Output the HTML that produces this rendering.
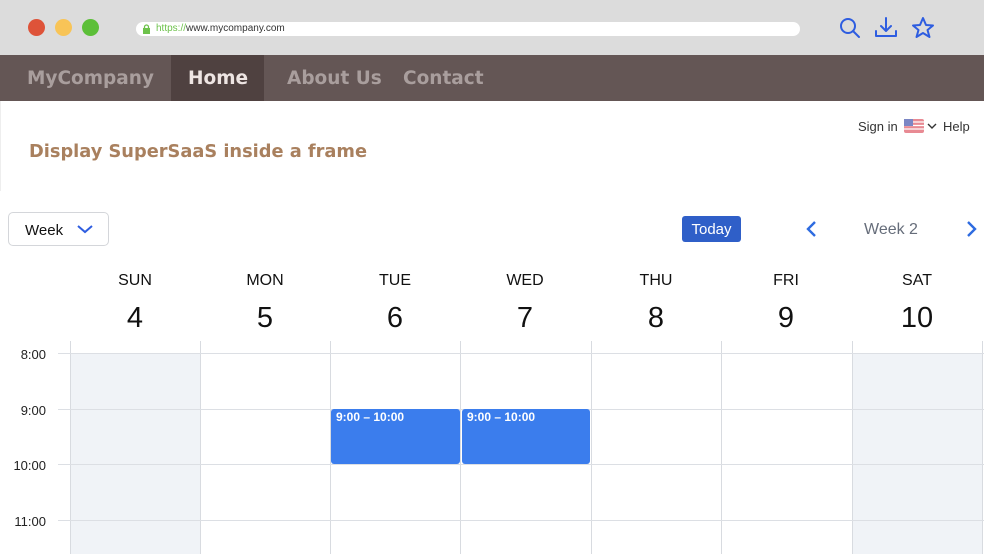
<!DOCTYPE html>
<html><head><meta charset="utf-8"><style>
*{margin:0;padding:0;box-sizing:border-box}
body{width:984px;height:554px;overflow:hidden;background:#fff;font-family:"Liberation Sans",sans-serif;position:relative}
.a{position:absolute}
.top{left:0;top:0;width:984px;height:55px;background:#dcdcdc}
.dot{width:17px;height:17px;border-radius:50%;top:19px}
.url{left:136px;top:22px;width:664px;height:14px;background:#fff;border-radius:7px;font-size:10px;line-height:14px;padding-left:20px;color:#333}
.nav{left:0;top:55px;width:984px;height:46px;background:#645655;font-family:"DejaVu Sans",sans-serif;font-weight:bold;font-size:18.5px;color:#a99e9d}
.nav span{position:absolute;top:13px}
.h{left:29px;top:141px;font-family:"DejaVu Sans",sans-serif;font-weight:bold;font-size:17.8px;color:#a9805e}
.vl{width:1px;background:#d8dbe0;top:341px;height:213px}
.hl{height:1px;background:#dcdfe4;left:58px;width:926px}
.dn{font-size:16px;color:#111;width:130px;text-align:center;top:272px}
.dd{font-size:29px;color:#111;width:130px;text-align:center;top:302px}
.t{font-size:13px;color:#222;width:46px;text-align:right;left:0}
.ev{background:#3b7ded;border-radius:3px;color:#fff;font-weight:bold;font-size:12px;padding:1px 5px;top:409px;height:55px}
</style></head><body>
<div class="a top"></div>
<div class="a dot" style="left:28px;background:#de5339"></div>
<div class="a dot" style="left:55px;background:#f8c457"></div>
<div class="a dot" style="left:82px;background:#5cbf38"></div>
<div class="a url"><span style="color:#6dc24b">https://</span>www.mycompany.com</div>
<svg class="a" style="left:142px;top:24px" width="9" height="10" viewBox="0 0 9 10"><rect x="1" y="4" width="7" height="6" fill="#6dc24b"/><path d="M2.5 4V3a2 2 0 0 1 4 0v1" stroke="#6dc24b" fill="none" stroke-width="1.3"/></svg>
<svg class="a" style="left:838px;top:16px" width="110" height="24" viewBox="0 0 110 24" fill="none" stroke="#2e5de0" stroke-width="2" stroke-linecap="round" stroke-linejoin="round">
<circle cx="10" cy="10" r="7"/><path d="M15 15l6 6"/>
<path d="M48 2v13M43 10l5 5 5-5M38 15v5h20v-5"/>
<path d="M85 2l3 7 7 .5-5.5 4.5 2 7-6.5-4-6.5 4 2-7-5.5-4.5 7-.5z"/>
</svg>
<div class="a nav">
<div class="a" style="left:171px;top:0;width:93px;height:46px;background:#4f4140"></div>
<span style="left:27px">MyCompany</span>
<span style="left:188px;color:#eee5e3">Home</span>
<span style="left:287px">About Us</span>
<span style="left:403px">Contact</span>
</div>
<div class="a" style="left:0;top:101px;width:1px;height:90px;background:#eee"></div>
<div class="a h">Display SuperSaaS inside a frame</div>
<div class="a" style="left:858px;top:119px;font-size:13px;color:#333">Sign in</div>
<svg class="a" style="left:904px;top:119px" width="20" height="14" viewBox="0 0 20 14"><rect width="20" height="14" rx="2" fill="#e88a93"/><path d="M0 3h20M0 6.5h20M0 10h20" stroke="#fff" stroke-width="1.3"/><rect width="9" height="7" fill="#7b86c4"/></svg>
<svg class="a" style="left:927px;top:122px" width="10" height="8"><path d="M1 2l4 4 4-4" stroke="#333" fill="none" stroke-width="1.4"/></svg>
<div class="a" style="left:943px;top:119px;font-size:13px;color:#333">Help</div>
<div class="a" style="left:8px;top:212px;width:101px;height:34px;border:1px solid #d4d6da;border-radius:5px;font-size:15px;color:#111;padding:9px 0 0 16px">Week</div>
<svg class="a" style="left:76px;top:223px" width="18" height="12"><path d="M2 3l7 6 7-6" stroke="#2e5de0" fill="none" stroke-width="2"/></svg>
<div class="a" style="left:682px;top:216px;width:59px;height:26px;background:#2f5fc8;border-radius:3px;color:#fff;font-size:15px;text-align:center;line-height:28px">Today</div>
<svg class="a" style="left:805px;top:220px" width="14" height="18"><path d="M10 2l-7 7 7 7" stroke="#2e6be0" fill="none" stroke-width="2.4"/></svg>
<div class="a" style="left:864px;top:221px;font-size:16px;color:#666d7a">Week 2</div>
<svg class="a" style="left:964px;top:220px" width="14" height="18"><path d="M4 2l7 7-7 7" stroke="#2e6be0" fill="none" stroke-width="2.4"/></svg>
<div class="a dn" style="left:70px">SUN</div><div class="a dd" style="left:70px">4</div>
<div class="a dn" style="left:200px">MON</div><div class="a dd" style="left:200px">5</div>
<div class="a dn" style="left:330px">TUE</div><div class="a dd" style="left:330px">6</div>
<div class="a dn" style="left:460px">WED</div><div class="a dd" style="left:460px">7</div>
<div class="a dn" style="left:591px">THU</div><div class="a dd" style="left:591px">8</div>
<div class="a dn" style="left:721px">FRI</div><div class="a dd" style="left:721px">9</div>
<div class="a dn" style="left:852px">SAT</div><div class="a dd" style="left:852px">10</div>
<div class="a" style="left:70px;top:353px;width:130px;height:201px;background:#f0f3f7"></div>
<div class="a" style="left:852px;top:353px;width:130px;height:201px;background:#f0f3f7"></div>
<div class="a vl" style="left:70px"></div><div class="a vl" style="left:200px"></div><div class="a vl" style="left:330px"></div><div class="a vl" style="left:460px"></div><div class="a vl" style="left:591px"></div><div class="a vl" style="left:721px"></div><div class="a vl" style="left:852px"></div><div class="a vl" style="left:982px"></div>
<div class="a hl" style="top:353px"></div><div class="a hl" style="top:409px"></div><div class="a hl" style="top:464px"></div><div class="a hl" style="top:520px"></div>
<div class="a t" style="top:347px">8:00</div>
<div class="a t" style="top:403px">9:00</div>
<div class="a t" style="top:458px">10:00</div>
<div class="a t" style="top:514px">11:00</div>
<div class="a ev" style="left:331px;width:129px">9:00 – 10:00</div>
<div class="a ev" style="left:462px;width:128px">9:00 – 10:00</div>
</body></html>
